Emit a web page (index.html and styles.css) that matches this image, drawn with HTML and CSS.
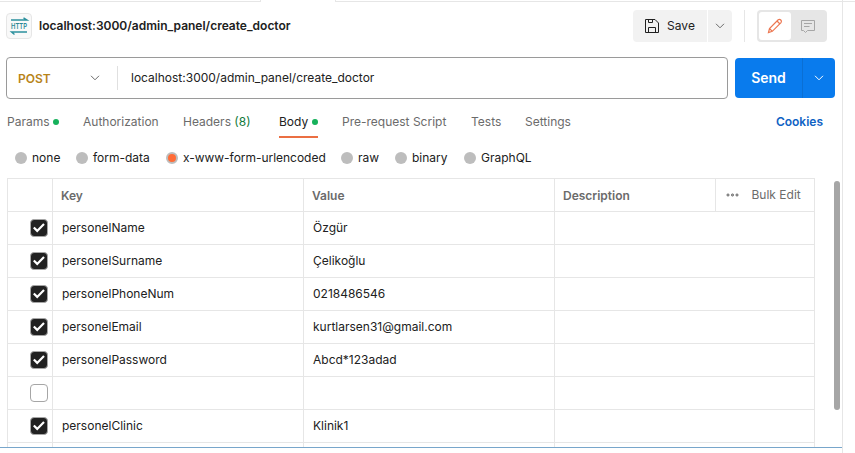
FILE: index.html
```html
<!DOCTYPE html>
<html lang="en">
<head>
<meta charset="utf-8">
<title>create_doctor</title>
<link rel="stylesheet" href="styles.css">
</head>
<body>
<div class="app">
  <main class="pane">
    <div class="tabstrip"><span class="strip left"></span><span class="strip right"></span></div>
    <header class="title-row">
      <span class="http-badge">
        <svg width="20" height="20" viewBox="0 0 20 20"><path d="M2 4h16L14.500 1.800M18 16H2.500L5.500 18.500" fill="none" stroke="#2b909d" stroke-width="1.400"/><text class="http-text" x="2" y="13" textLength="16" lengthAdjust="spacingAndGlyphs">HTTP</text></svg>
      </span>
      <h1 class="title">localhost:3000/admin_panel/create_doctor</h1>
      <div class="save-group">
        <button class="save"><svg width="14" height="14" viewBox="0 0 14 14" fill="none" stroke="#212121" stroke-width="1"><path d="M.5.5h9.500l3.500 3.500v9.500H.5zM3.500.5v3h4v-3M3.500 13.500v-5h7v5"/></svg><span>Save</span></button>
        <button class="save-more"><svg width="10" height="6" viewBox="0 0 10 6" fill="none" stroke="#6b6b6b"><path d="M1 .8l4 4 4-4"/></svg></button>
      </div>
      <div class="mode-group">
        <button class="mode active"><svg width="16" height="16" viewBox="0 0 16 16" fill="none" stroke="#ec7650" stroke-width="1.200"><path d="M1.500 14.500l1-4 8.700-8.700q1.400-1 2.600.2t.2 2.600l-8.700 8.700zM10 3l3 3M2.500 10.500l2.800 2.800"/></svg></button>
        <button class="mode"><svg width="16" height="15" viewBox="0 0 16 15" fill="none" stroke="#a6a6a6" stroke-width="1"><path d="M1.500 1.500h13v10H7.500L5.500 13.500l-2-2h-2zM4 4.500h8M4 7.500h5.500"/></svg></button>
      </div>
    </header>
    <div class="request-row">
      <div class="url-box">
        <div class="method"><span>POST</span><svg width="10" height="6" viewBox="0 0 10 6" fill="none" stroke="#6b6b6b"><path d="M1 .8l4 4 4-4"/></svg></div>
        <div class="url">localhost:3000/admin_panel/create_doctor</div>
      </div>
      <div class="send-group">
        <button class="send">Send</button>
        <button class="send-more"><svg width="10" height="6" viewBox="0 0 10 6" fill="none" stroke="#fff"><path d="M1 .8l4 4 4-4"/></svg></button>
      </div>
    </div>
    <nav class="tabs">
      <span class="tab params">Params<i class="dot"></i></span>
      <span class="tab auth">Authorization</span>
      <span class="tab headers">Headers <b class="count">(8)</b></span>
      <span class="tab current">Body<i class="dot"></i></span>
      <span class="tab script">Pre-request Script</span>
      <span class="tab tests">Tests</span>
      <span class="tab">Settings</span>
      <a class="cookies">Cookies</a>
    </nav>
    <div class="types">
      <span class="type none"><i class="radio"></i>none</span>
      <span class="type form"><i class="radio"></i>form-data</span>
      <span class="type encoded"><i class="radio on"></i>x-www-form-urlencoded</span>
      <span class="type raw"><i class="radio"></i>raw</span>
      <span class="type binary"><i class="radio"></i>binary</span>
      <span class="type"><i class="radio"></i>GraphQL</span>
    </div>
    <div class="body-area">
      <div class="table">
        <div class="row head"><div></div><div>Key</div><div>Value</div><div>Description</div><div class="bulk"><svg width="13" height="4" viewBox="0 0 13 4" fill="#aaa" stroke="#6b6b6b" stroke-width=".9"><circle cx="2" cy="2" r="1.100"/><circle cx="6.500" cy="2" r="1.100"/><circle cx="11" cy="2" r="1.100"/></svg><span>Bulk Edit</span></div></div>
        <div class="row"><div><i class="check on"></i></div><div>personelName</div><div>Özgür</div><div></div></div>
        <div class="row"><div><i class="check on"></i></div><div>personelSurname</div><div>Çelikoğlu</div><div></div></div>
        <div class="row"><div><i class="check on"></i></div><div>personelPhoneNum</div><div>0218486546</div><div></div></div>
        <div class="row"><div><i class="check on"></i></div><div>personelEmail</div><div>kurtlarsen31@gmail.com</div><div></div></div>
        <div class="row"><div><i class="check on"></i></div><div>personelPassword</div><div>Abcd*123adad</div><div></div></div>
        <div class="row"><div><i class="check"></i></div><div></div><div></div><div></div></div>
        <div class="row"><div><i class="check on"></i></div><div>personelClinic</div><div>Klinik1</div><div></div></div>
        <div class="row"><div></div><div></div><div></div><div></div></div>
      </div>
      <div class="scrollbar"></div>
    </div>
    <div class="bottom"></div>
  </main>
  <aside class="side"></aside>
</div>
<script>
document.querySelectorAll('.check.on').forEach(function (box) {
  box.innerHTML = '<svg width="12" height="10" viewBox="0 0 12 10" fill="none" stroke="#fff" stroke-width="2.2"><path d="M.8 4.500l3.400 3.400L11 1"/></svg>';
});
</script>
</body>
</html>
```
FILE: styles.css
```css
* { box-sizing: border-box; }
body { margin: 0; background: #fff; color: #212121; font: 12px/16px Inter, "Liberation Sans", sans-serif; overflow: hidden; }
button { border: 0; padding: 0; margin: 0; font: inherit; color: inherit; display: flex; align-items: center; justify-content: center; }
svg { display: block; flex: none; overflow: visible; }
.app { display: flex; width: 855px; height: 453px; }
.pane { width: 843px; height: 453px; border-right: 1px solid #e6e6e6; display: flex; flex-direction: column; }
.side { flex: 1; height: 2px; border-bottom: 1px solid #e6e6e6; }
.tabstrip { display: flex; justify-content: space-between; height: 2px; }
.strip { border-bottom: 1px solid #e6e6e6; }
.strip.left { width: 261px; border-right: 1px solid #e6e6e6; }
.strip.right { width: 507px; border-left: 1px solid #e6e6e6; }
.title-row { display: flex; align-items: center; height: 48px; padding-left: 6px; }
.http-badge { width: 26px; height: 26px; border: 1px solid #e6e6e6; border-radius: 4px; background: #f9f9f9; display: flex; align-items: center; justify-content: center; }
.http-text { font: 600 8px Inter, sans-serif; fill: #2b8795; }
.title { margin: 0 0 0 7px; font-size: 12px; font-weight: 600; width: 594px; }
.save-group { display: flex; gap: 1px; height: 32px; }
.save { width: 74px; gap: 8px; background: #f2f2f2; border-radius: 4px 0 0 4px; }
.save-more { width: 24px; background: #f2f2f2; border-radius: 0 4px 4px 0; }
.mode-group { display: flex; width: 70px; height: 32px; margin-left: 25px; padding: 2px; background: #e6e6e6; border-radius: 4px; position: relative; }
.mode-group::before { content: ""; position: absolute; left: -13px; top: 0; width: 1px; height: 32px; background: #e6e6e6; }
.mode { width: 34px; background: none; }
.mode.active { width: 32px; background: #fff; border-radius: 3px; }
.request-row { display: flex; align-items: center; gap: 7px; height: 56px; padding-left: 6px; }
.url-box { display: flex; align-items: center; width: 722px; height: 42px; border: 1px solid #9a9a9a; border-radius: 4px; }
.method { display: flex; align-items: center; justify-content: space-between; width: 111px; height: 24px; padding: 0 17px 0 11px; border-right: 1px solid #e0e0e0; color: #b88419; font-weight: 600; }
.method span { padding-top: 2px; }
.url { padding-left: 13px; }
.send-group { display: flex; width: 100px; height: 40px; border-radius: 4px; overflow: hidden; background: #097bed; color: #fff; }
.send { width: 68px; background: none; border-right: 1px solid #0a6fd4; font-size: 14px; font-weight: 600; }
.send-more { width: 32px; background: none; }
.tabs { display: flex; height: 32px; padding: 0 19px 0 7px; color: #6b6b6b; }
.tab { display: flex; align-items: center; height: 32px; white-space: pre; }
.params { width: 76px; }
.auth { width: 100px; }
.headers { width: 96px; }
.count { font-weight: 400; color: #127a3c; }
.tab.current { width: 39px; margin-right: 24px; color: #212121; border-bottom: 2px solid #eb6f43; padding-top: 2px; }
.script { width: 129px; }
.tests { width: 54px; }
.dot { width: 6px; height: 6px; border-radius: 50%; background: #16b15b; margin-left: 4px; }
.params .dot { margin-left: 3px; }
.cookies { margin-left: auto; color: #0f62c4; font-weight: 600; line-height: 32px; }
.types { display: flex; align-items: center; height: 40px; padding-left: 15px; }
.type { display: flex; align-items: center; gap: 5px; white-space: nowrap; }
.type.none { width: 61px; }
.type.form { width: 90px; }
.type.encoded { width: 175px; letter-spacing: -.03px; }
.type.raw { width: 54px; }
.type.binary { width: 69px; }
.radio { width: 12px; height: 12px; border-radius: 50%; background: #bdbdbd; }
.radio.on { background: #ff6c37; border: 2px solid #bdbdbd; }
.body-area { display: flex; height: 269px; overflow: hidden; }
.table { width: 808px; margin-left: 7px; border: 1px solid #e6e6e6; border-bottom: 0; }
.row { display: grid; grid-template-columns: 45px 251px 251px 1fr; height: 33px; border-bottom: 1px solid #e6e6e6; }
.row > div { display: flex; align-items: center; padding-left: 9px; border-right: 1px solid #e6e6e6; }
.row > div:first-child { padding: 0 4px 0 0; justify-content: flex-end; }
.row > div:last-child { border-right: 0; }
.row.head { grid-template-columns: 45px 251px 251px 161px 1fr; color: #6b6b6b; font-weight: 600; }
.row.head > div { padding: 2px 0 0 8px; }
.row.head > .bulk { font-weight: 400; gap: 13px; padding: 0 0 0 9.5px; }
.check { width: 18px; height: 18px; border: 1px solid #a6a6a6; border-radius: 4px; display: flex; align-items: center; justify-content: center; }
.check.on { background: #212121; }
.scrollbar { width: 6px; height: 229px; margin: 3px 0 0 19px; background: #a6a6a6; border-radius: 3px; }
.bottom { height: 1px; background: #78a6cb; }
```
